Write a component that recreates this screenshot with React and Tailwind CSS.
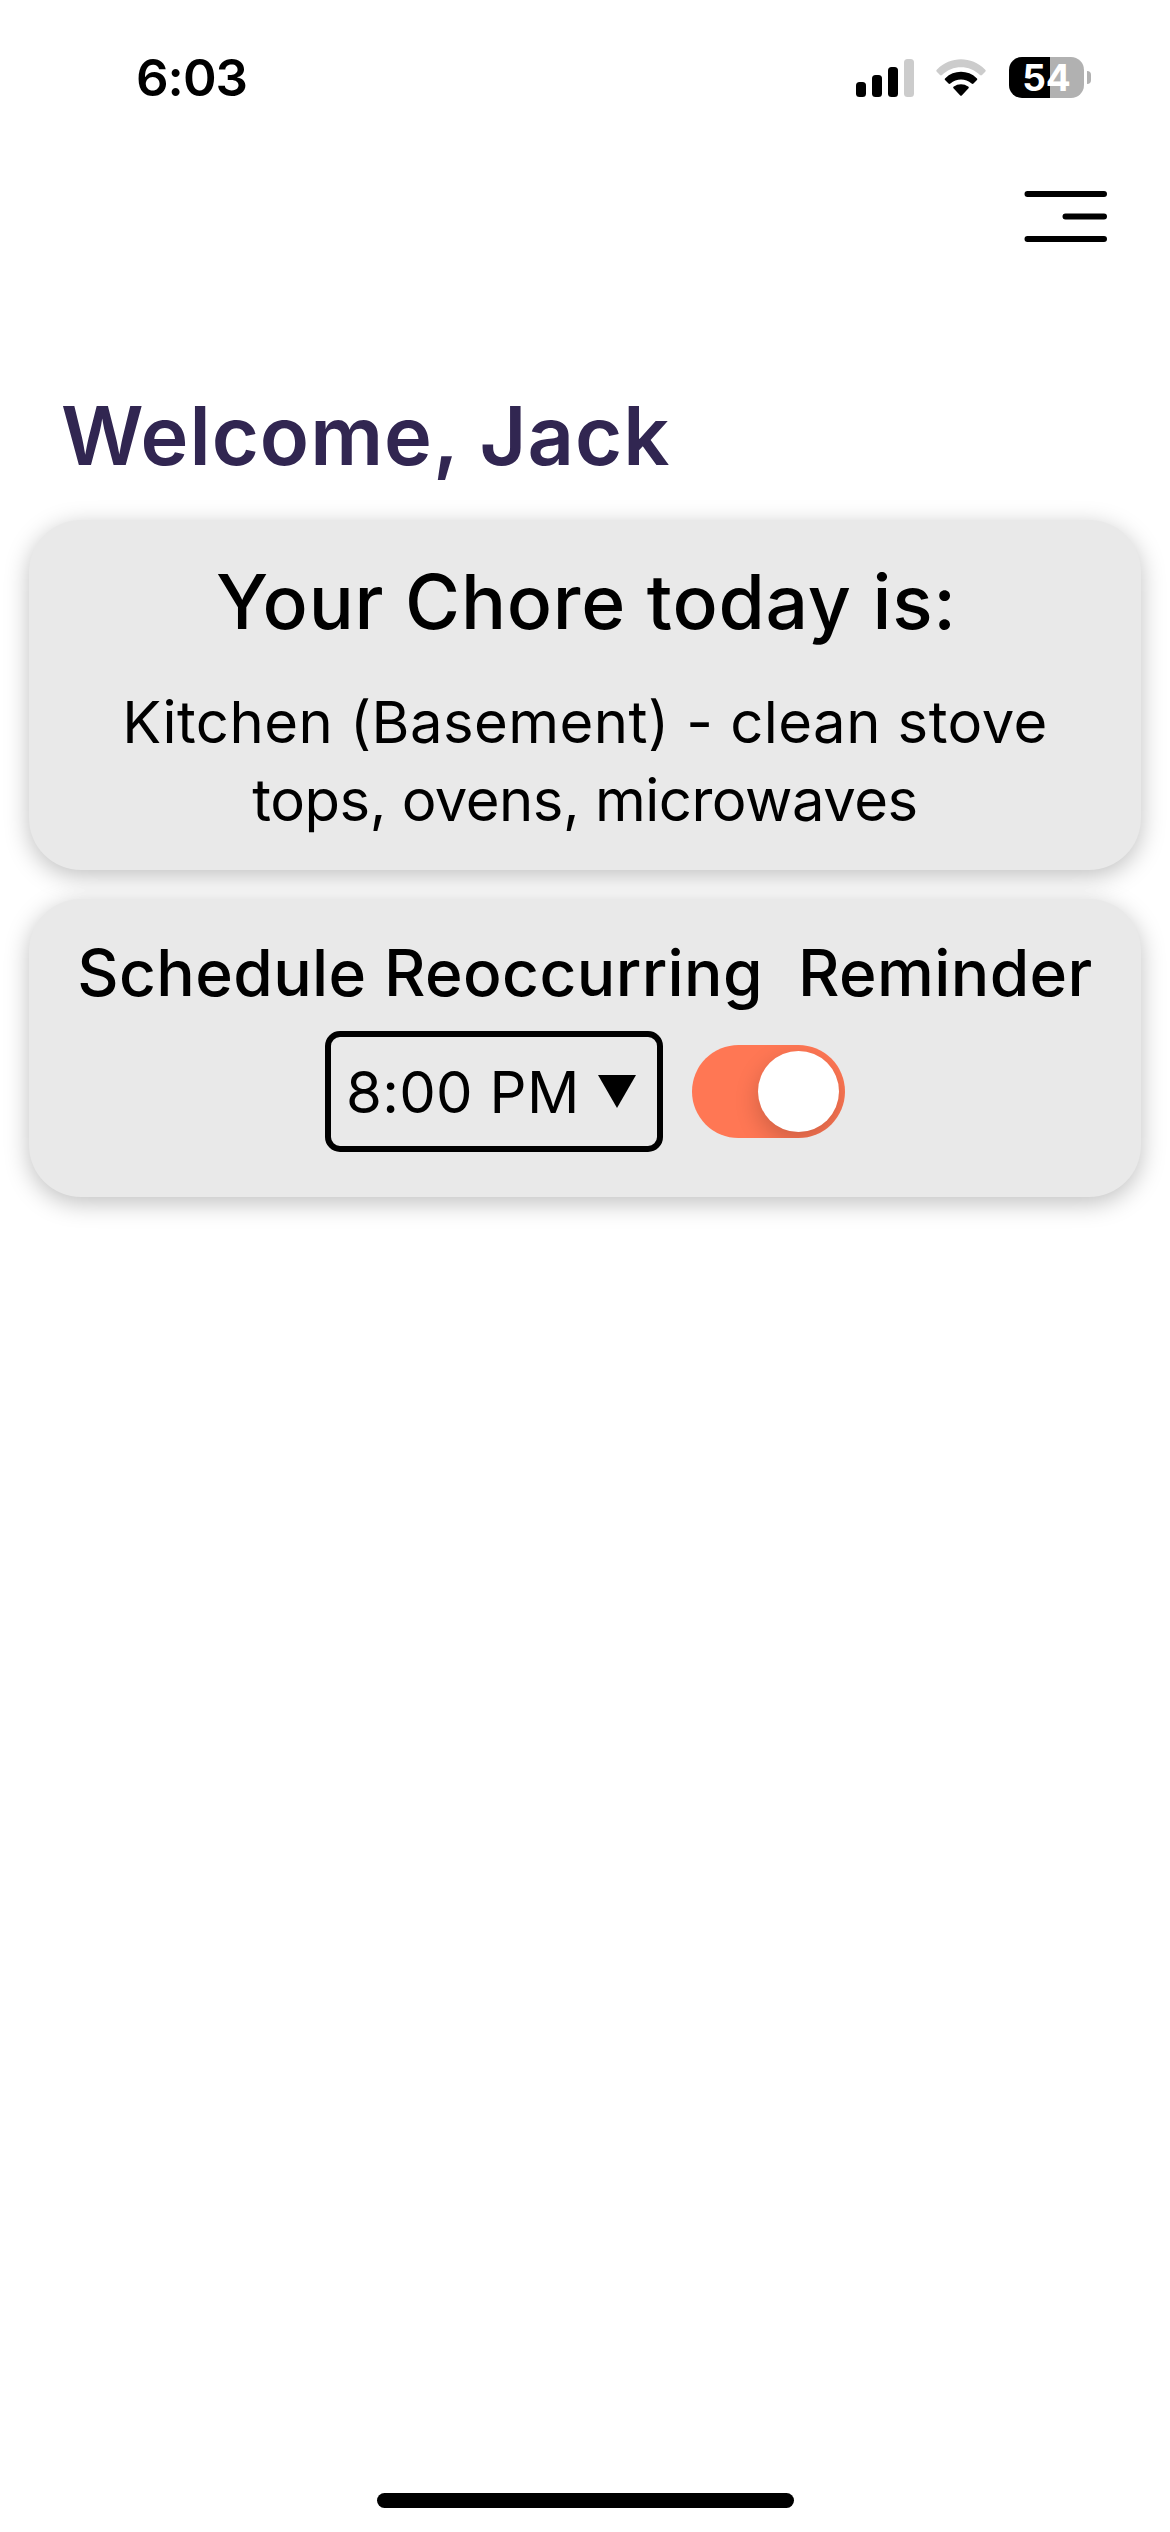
import React from "react";

const Signal = () => (
  <svg width="58" height="38" viewBox="0 0 58 38" className="block">
    <rect x="0" y="23" width="10" height="15" rx="3.5" />
    <rect x="16" y="16" width="10" height="22" rx="3.5" />
    <rect x="32" y="8" width="10" height="30" rx="3.5" />
    <rect x="48" y="0" width="10" height="38" rx="3.5" fill="#cccccc" />
  </svg>
);

const Wifi = () => (
  <svg width="50" height="38" viewBox="0 0 50 38" className="block">
    <path d="M1 10.5C14.5-3.2 35.5-3.2 49 10.5C50 11.5 50 12 49 13L46 16C45.300 16.600 44.700 16.600 44 16C33.500 5.500 16.500 5.500 6 16C5.300 16.600 4.700 16.600 4 16L1 13C0 12 0 11.500 1 10.500Z" fill="#cccccc" />
    <path d="M9.300 19.200C18 10.700 32 10.700 40.700 19.200C41.500 20 41.500 20.500 40.700 21.300L37.500 24.500C36.900 25.100 36.300 25.100 35.600 24.500C29.600 19.200 20.400 19.200 14.400 24.500C13.700 25.100 13.100 25.100 12.500 24.500L9.300 21.300C8.500 20.500 8.500 20 9.300 19.200Z" />
    <path d="M17.800 27.600C21.800 24.300 28.200 24.300 32.200 27.600C33 28.300 33 28.900 32.300 29.600L26 36.200C25.300 36.900 24.700 36.900 24 36.200L17.700 29.600C17 28.900 17 28.300 17.800 27.600Z" />
  </svg>
);

const Menu = () => (
  <svg width="84" height="52" viewBox="0 0 84 52" className="block" stroke="#000" strokeWidth="6" strokeLinecap="round">
    <path d="M3.500 4H80M41.500 26.500H80M3.500 49H80" />
  </svg>
);

export default function App() {
  return (
    <div className="flex h-[2532px] w-[1170px] flex-col overflow-hidden bg-white font-['Inter',sans-serif] text-black">
      <header className="flex h-[154px] shrink-0 justify-between pl-[136px] pr-[79px]">
        <span className="mt-[48px] h-[60px] text-[51px] font-semibold leading-[60px] tracking-[-1px]">6:03</span>
        <div className="flex pt-[57px]">
          <div className="mt-[2px]"><Signal /></div>
          <div className="ml-[22px] mt-[2px]"><Wifi /></div>
          <div className="ml-[23px] flex h-[41px] w-[75px] items-center justify-center rounded-[13px] bg-[linear-gradient(to_right,#000_41px,#b1b1b1_41px)]">
            <span className="text-[37px] font-bold leading-none text-white">54</span>
          </div>
          <div className="ml-[3px] mt-[14px] h-[13px] w-[4px] rounded-r-full bg-[#b1b1b1]" />
        </div>
      </header>
      <nav className="flex h-[212px] shrink-0 justify-end pr-[62px] pt-[36px]">
        <Menu />
      </nav>
      <main className="flex flex-1 flex-col">
        <h1 className="h-[154px] pl-[61px] text-[81px] font-semibold leading-[140px] text-[#312651]">
          <span className="inline-block leading-[100px] tracking-[1px]">Welcome, Jack</span>
        </h1>
        <section className="mx-[29px] flex h-[350px] flex-col items-center rounded-[52px] bg-[#e9e9e9] pt-[32px] shadow-[0_6px_24px_rgba(0,0,0,0.25)]">
          <h2 className="whitespace-pre pl-[3px] text-[75px] font-medium leading-[100px] tracking-[0.78px]">Your Chore today is:</h2>
          <p className="mt-[31px] whitespace-pre text-[58px] leading-[78px] tracking-[0.45px]">Kitchen (Basement) - clean stove</p>
          <p className="whitespace-pre text-[58px] leading-[78px] tracking-[-0.5px]">tops, ovens, microwaves</p>
        </section>
        <section className="mx-[29px] mt-[29px] flex h-[298px] flex-col items-center rounded-[52px] bg-[#e9e9e9] pt-[34px] shadow-[0_6px_24px_rgba(0,0,0,0.25)]">
          <h2 className="whitespace-pre text-[64px] font-medium leading-[80px] tracking-[0.4px]">{"Schedule Reoccurring  Reminder"}</h2>
          <div className="mt-[18px] flex items-center">
            <div className="flex h-[121px] w-[338px] items-center rounded-[15px] border-[6px] border-black pl-[15px]">
              <span className="whitespace-pre text-[58px] leading-[78px] tracking-[0.3px]">8:00 PM</span>
              <svg width="38" height="33" viewBox="0 0 38 33" className="ml-[18px] block"><path d="M0 0H38L19 33Z" /></svg>
            </div>
            <div className="ml-[29px] flex h-[93px] w-[153px] items-center justify-end overflow-hidden rounded-full bg-[#ff7754] pr-[6px]">
              <div className="h-[81px] w-[81px] rounded-full bg-white shadow-[0_9px_24px_rgba(0,0,0,0.2)]" />
            </div>
          </div>
        </section>
      </main>
      <footer className="flex h-[39px] shrink-0 justify-center">
        <div className="h-[15px] w-[417px] rounded-full bg-black" />
      </footer>
    </div>
  );
}
